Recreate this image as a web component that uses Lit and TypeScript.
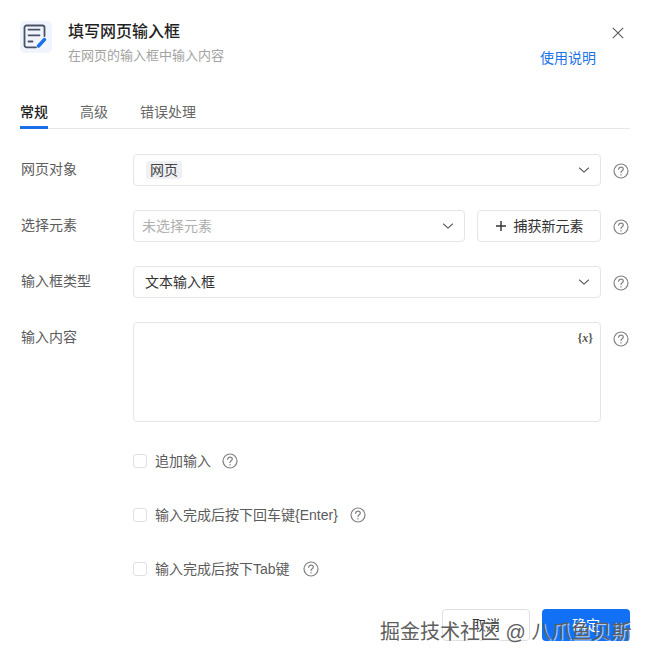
import { LitElement, html, css, svg } from "lit";
import { customElement } from "lit/decorators.js";

const help = html`<svg class="help" viewBox="0 0 16 16" width="16" height="16" fill="none" stroke="#808080" stroke-width="1.200" stroke-linecap="round">
  <circle cx="8" cy="8" r="7"/>
  <path d="M5.700 6.300c0-1.300 1-2.200 2.300-2.200s2.300.9 2.300 2c0 1.800-2.300 1.700-2.300 3.500"/>
  <path d="M8 11.600v.4"/>
</svg>`;

const chevron = svg`<svg class="chev" viewBox="0 0 12 12" width="12" height="12" fill="none" stroke="#5f5f5f" stroke-width="1.100" stroke-linecap="round" stroke-linejoin="round"><path d="M1.500 4l4.500 4.200L10.500 4"/></svg>`;

@customElement("app-root")
export class AppRoot extends LitElement {
  static styles = css`
    :host {
      display: block;
      position: relative;
      width: 650px;
      height: 662px;
      box-sizing: border-box;
      background: #fff;
      overflow: hidden;
      font-family: "Liberation Sans", "Noto Sans CJK SC", sans-serif;
      color: #555;
      font-size: 14px;
    }
    .dialog { padding: 21px 20px 0; }
    .header { display: flex; height: 65px; }
    .logo {
      width: 32px; height: 32px; border-radius: 5px; background: #f0f4fd;
      display: flex; align-items: center; justify-content: center; flex: none;
    }
    .head-text { margin-left: 16px; flex: 1; }
    .title { font-family: "Noto Sans CJK SC", sans-serif; font-size: 16px; line-height: 20px; margin-top: -1px; font-weight: 500; color: #1f1f1f; }
    .sub { font-size: 13px; line-height: 18px; margin-top: 7px; color: #a3a3a3; }
    .head-right { display: flex; flex-direction: column; align-items: flex-end; width: 90px; }
    .close { display: block; margin: 6px 6px 0 0; }
    .guide { font-size: 14px; line-height: 18px; margin-top: 10px; margin-right: 34px; color: #1a73e8; white-space: nowrap; }

    .tabs { font-family: "Noto Sans CJK SC", sans-serif; display: flex; gap: 32px; height: 43px; border-bottom: 1px solid #e8e8e8; box-sizing: border-box; }
    .tab { font-size: 14px; line-height: 20px; padding-top: 15px; height: 43px; box-sizing: border-box; color: #666; }
    .tab.on { color: #1f1f1f; font-weight: 500; border-bottom: 3px solid #1a6fe8; }

    .form { margin-top: 25px; display: flex; flex-direction: column; gap: 24px; }
    .row { display: flex; align-items: flex-start; }
    .label { width: 113px; flex: none; font-size: 14px; line-height: 20px; padding: 5px 0 0 1px; box-sizing: border-box; color: #5c5c5c; }
    .field {
      height: 32px; box-sizing: border-box; border: 1px solid #e3e5e8; border-radius: 4px;
      display: flex; align-items: center; justify-content: space-between;
      padding: 0 10px 0 11px; flex: 1; min-width: 0;
    }
    .controls { width: 468px; display: flex; gap: 12px; flex: none; }
    .chip { background: #eef0f3; border-radius: 3px; padding: 0 4px; line-height: 18px; font-size: 14px; color: #444; margin-left: 1px; }
    .ph { color: #b0b0b0; font-size: 14px; line-height: 20px; margin-left: -3px; }
    .val { color: #333; font-size: 14px; line-height: 20px; }
    .capture {
      width: 124px; height: 32px; flex: none; box-sizing: border-box; border: 1px solid #e3e5e8; border-radius: 4px;
      display: flex; align-items: center; justify-content: center; gap: 7px; color: #333; font-size: 14px; line-height: 20px;
    }
    .help { flex: none; margin: 9px 0 0 12px; }
    .area {
      width: 468px; height: 100px; flex: none; box-sizing: border-box; border: 1px solid #e3e5e8; border-radius: 4px;
      display: flex; justify-content: flex-end; padding: 5px 7px 0 0;
    }
    .fx { font-family: "Liberation Serif", serif; font-size: 12px; line-height: 20px; color: #555; font-weight: 700; }

    .checks { margin-top: 29px; margin-left: 113px; display: flex; flex-direction: column; gap: 34px; }
    .check { display: flex; align-items: center; height: 20px; color: #5c5c5c; font-size: 14px; line-height: 20px; }
    .box { width: 14px; height: 14px; box-sizing: border-box; border: 1px solid #dfe1e5; border-radius: 3px; margin-right: 8px; flex: none; }
    .check .help { margin: 0 0 0 11px; }
    .check:nth-child(2) .help { margin-left: 12px; }
    .check:nth-child(3) .help { margin-left: 13px; }

    .footer { display: flex; justify-content: flex-end; gap: 12px; margin-top: 30px; }
    .btn { width: 88px; height: 32px; box-sizing: border-box; border-radius: 4px; display: flex; align-items: center; justify-content: center; font-size: 14px; line-height: 20px; }
    .cancel { border: 1px solid #e0e0e0; color: #333; }
    .ok { background: #1270f5; color: #fff; }

    .watermark {
      position: absolute; left: 380px; top: 619px; font-size: 20px; line-height: 26px; color: #5e5e5e;
      white-space: nowrap; text-shadow: 1px 1px 1px rgba(255,255,255,.8);
    }
  `;

  render() {
    return html`
      <div class="dialog">
        <div class="header">
          <div class="logo">
            <svg viewBox="0 0 32 32" width="32" height="32" fill="none">
              <path d="M16 26.300H6.500A2 2 0 0 1 4.500 24.300V6.500A2 2 0 0 1 6.500 4.500h16A2 2 0 0 1 24.500 6.500V15" stroke="#4a5266" stroke-width="1.800" stroke-linecap="round"/>
              <path d="M8.500 8.700h11M8.500 14.300h11M8.500 20.500h4" stroke="#4a5266" stroke-width="1.800" stroke-linecap="round"/>
              <path d="M18.500 25l6-6.500" stroke="#1a73e8" stroke-width="3.400" stroke-linecap="round"/>
            </svg>
          </div>
          <div class="head-text">
            <div class="title">填写网页输入框</div>
            <div class="sub">在网页的输入框中输入内容</div>
          </div>
          <div class="head-right">
            <svg class="close" viewBox="0 0 12 12" width="12" height="12" fill="none" stroke="#5a5a5a" stroke-width="1.100"><path d="M.8.8l10.400 10.400M11.200.8L.8 11.200"/></svg>
            <div class="guide">使用说明</div>
          </div>
        </div>
        <div class="tabs">
          <div class="tab on">常规</div>
          <div class="tab">高级</div>
          <div class="tab">错误处理</div>
        </div>
        <div class="form">
          <div class="row">
            <div class="label">网页对象</div>
            <div class="controls"><div class="field"><span class="chip">网页</span>${chevron}</div></div>
            ${help}
          </div>
          <div class="row">
            <div class="label">选择元素</div>
            <div class="controls">
              <div class="field"><span class="ph">未选择元素</span>${chevron}</div>
              <div class="capture">
                <svg viewBox="0 0 12 12" width="12" height="12" fill="none" stroke="#333" stroke-width="1.400"><path d="M6 1v10M1 6h10"/></svg>
                <span>捕获新元素</span>
              </div>
            </div>
            ${help}
          </div>
          <div class="row">
            <div class="label">输入框类型</div>
            <div class="controls"><div class="field"><span class="val">文本输入框</span>${chevron}</div></div>
            ${help}
          </div>
          <div class="row">
            <div class="label">输入内容</div>
            <div class="area"><span class="fx">{<i>x</i>}</span></div>
            ${help}
          </div>
        </div>
        <div class="checks">
          <div class="check"><span class="box"></span>追加输入${help}</div>
          <div class="check"><span class="box"></span>输入完成后按下回车键{Enter}${help}</div>
          <div class="check"><span class="box"></span>输入完成后按下Tab键${help}</div>
        </div>
        <div class="footer">
          <div class="btn cancel">取消</div>
          <div class="btn ok">确定</div>
        </div>
      </div>
      <div class="watermark">掘金技术社区 @ 八爪鱼贝斯</div>
    `;
  }
}
